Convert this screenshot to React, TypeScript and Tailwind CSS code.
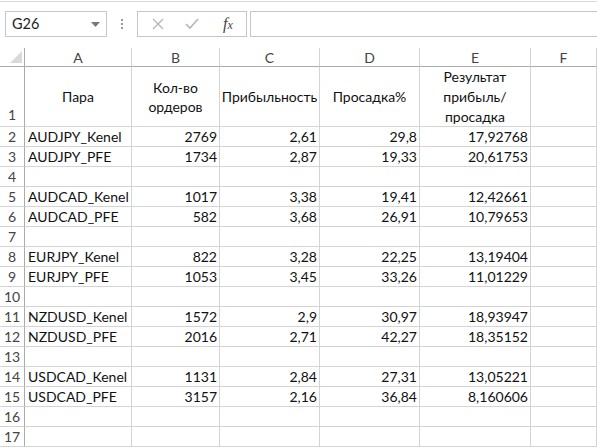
import React from "react";

const cols = [107, 88, 100, 100, 111, 66];

type Row = { n: number; a?: string; b?: string; c?: string; d?: string; e?: string };

const rows: Row[] = [
  { n: 2, a: "AUDJPY_Kenel", b: "2769", c: "2,61", d: "29,8", e: "17,92768" },
  { n: 3, a: "AUDJPY_PFE", b: "1734", c: "2,87", d: "19,33", e: "20,61753" },
  { n: 4 },
  { n: 5, a: "AUDCAD_Kenel", b: "1017", c: "3,38", d: "19,41", e: "12,42661" },
  { n: 6, a: "AUDCAD_PFE", b: "582", c: "3,68", d: "26,91", e: "10,79653" },
  { n: 7 },
  { n: 8, a: "EURJPY_Kenel", b: "822", c: "3,28", d: "22,25", e: "13,19404" },
  { n: 9, a: "EURJPY_PFE", b: "1053", c: "3,45", d: "33,26", e: "11,01229" },
  { n: 10 },
  { n: 11, a: "NZDUSD_Kenel", b: "1572", c: "2,9", d: "30,97", e: "18,93947" },
  { n: 12, a: "NZDUSD_PFE", b: "2016", c: "2,71", d: "42,27", e: "18,35152" },
  { n: 13 },
  { n: 14, a: "USDCAD_Kenel", b: "1131", c: "2,84", d: "27,31", e: "13,05221" },
  { n: 15, a: "USDCAD_PFE", b: "3157", c: "2,16", d: "36,84", e: "8,160606" },
  { n: 16 },
  { n: 17 },
];

const font = { fontFamily: "Lato, 'Noto Sans', sans-serif" };

export default function App() {
  return (
    <div className="w-[597px] h-[447px] overflow-hidden bg-white text-[#111]" style={font}>
      {/* formula bar */}
      <div className="h-[48px] pt-[1px]">
        <div className="h-[47px] border-t border-[#d9d9d9] flex items-start pt-[9px] pl-[5px]">
          <div className="w-[102px] h-[26px] border border-[#c6c6c6] flex items-center justify-between pl-[6px] pr-[6px]">
            <span className="text-[14.5px] text-[#222]">G26</span>
            <svg width="9" height="5" viewBox="0 0 9 5">
              <path d="M0 0 L9 0 L4.5 5 Z" fill="#777" />
            </svg>
          </div>
          <div className="w-[30px] h-[26px] flex flex-col items-center justify-center gap-[2px]">
            <span className="w-[2px] h-[2px] bg-[#999]" />
            <span className="w-[2px] h-[2px] bg-[#999]" />
            <span className="w-[2px] h-[2px] bg-[#999]" />
          </div>
          <div className="w-[110px] h-[26px] border border-[#c6c6c6] flex items-center">
            <div className="w-[36px] flex justify-center pl-[4px]">
              <svg width="12" height="12" viewBox="0 0 12 12">
                <path d="M1 1 L11 11 M11 1 L1 11" stroke="#b5b5b5" strokeWidth="1.3" />
              </svg>
            </div>
            <div className="w-[36px] flex justify-center">
              <svg width="14" height="12" viewBox="0 0 14 12">
                <path d="M1 6 L5 10 L13 1" stroke="#b5b5b5" strokeWidth="1.6" fill="none" />
              </svg>
            </div>
            <div className="w-[36px] flex justify-center">
              <span className="text-[16px] italic text-[#444] leading-none" style={{ fontFamily: "'Liberation Serif', serif" }}>
                f<span className="text-[12px]">x</span>
              </span>
            </div>
          </div>
          <div className="ml-[3px] flex-1 h-[26px] border border-[#c6c6c6] border-r-0" />
        </div>
      </div>

      {/* header row */}
      <div className="flex h-[19px]">
        <div className="w-[25px] h-full border-r border-b border-[#ababab] relative">
          <svg className="absolute left-[10px] top-[3px]" width="12" height="12" viewBox="0 0 12 12">
            <path d="M12 0 L12 12 L0 12 Z" fill="#dadada" />
          </svg>
        </div>
        {["A", "B", "C", "D", "E", "F"].map((l, i) => (
          <div
            key={l}
            className="h-full border-r border-b border-r-[#d4d4d4] border-b-[#ababab] flex items-center justify-center text-[14px] text-[#444]"
            style={{ width: cols[i] }}
          >
            {l}
          </div>
        ))}
      </div>

      {/* row 1 */}
      <div className="flex h-[60px] text-[14px]">
        <div className="w-[25px] h-full border-r border-b border-r-[#ababab] border-b-[#d4d4d4] flex items-end justify-center pb-[1px] text-[#444]">
          1
        </div>
        <div className="h-full border-r border-b border-[#d4d4d4] flex items-center justify-center" style={{ width: cols[0] }}>
          Пара
        </div>
        <div className="h-full border-r border-b border-[#d4d4d4] flex items-center justify-center text-center leading-[19px]" style={{ width: cols[1] }}>
          Кол-во<br />ордеров
        </div>
        <div className="h-full border-r border-b border-[#d4d4d4] flex items-center justify-center" style={{ width: cols[2] }}>
          Прибыльность
        </div>
        <div className="h-full border-r border-b border-[#d4d4d4] flex items-center justify-center" style={{ width: cols[3] }}>
          Просадка%
        </div>
        <div className="h-full border-r border-b border-[#d4d4d4] flex items-center justify-center text-center leading-[20px]" style={{ width: cols[4] }}>
          Результат<br />прибыль/<br />просадка
        </div>
        <div className="h-full border-r border-b border-[#d4d4d4]" style={{ width: cols[5] }} />
      </div>

      {rows.map((r) => (
        <div key={r.n} className="flex h-[20px] text-[14px]">
          <div className="w-[25px] h-full border-r border-b border-r-[#ababab] border-b-[#d4d4d4] flex items-center justify-center text-[#444]">
            {r.n}
          </div>
          <div className="h-full border-r border-b border-[#d4d4d4] flex items-center pl-[3px]" style={{ width: cols[0] }}>
            {r.a}
          </div>
          {[r.b, r.c, r.d, r.e].map((v, i) => (
            <div
              key={i}
              className="h-full border-r border-b border-[#d4d4d4] flex items-center justify-end pr-[2px]"
              style={{ width: cols[i + 1] }}
            >
              {v}
            </div>
          ))}
          <div className="h-full border-r border-b border-[#d4d4d4]" style={{ width: cols[5] }} />
        </div>
      ))}
    </div>
  );
}
